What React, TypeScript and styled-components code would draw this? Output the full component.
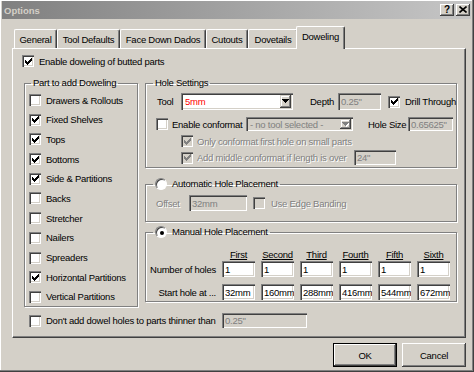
import React from "react";
import styled, { createGlobalStyle } from "styled-components";

const FACE = "#d4d0c8";
const SHADOW = "#808080";
const DARK = "#404040";
const HI = "#ffffff";
const SUNKEN = `inset 1px 1px ${SHADOW}, inset 2px 2px ${DARK}, inset -1px -1px ${HI}, inset -2px -2px ${FACE}`;

const GlobalStyle = createGlobalStyle`
  * { box-sizing: border-box; }
  html, body { margin: 0; padding: 0; background: ${FACE}; }
  body {
    font-family: "Liberation Sans", Arial, sans-serif;
    font-size: 9.5px;
    letter-spacing: -0.25px;
    color: #000;
  }
`;

const Window = styled.div`
  width: 474px;
  height: 372px;
  background: ${FACE};
  padding: 1px 3px 3px 2px;
  box-shadow: inset -1px -1px ${DARK}, inset -2px -2px ${SHADOW}, inset 1px 1px ${HI};
  display: flex;
  flex-direction: column;
`;

const TitleBar = styled.div`
  height: 18px;
  flex: none;
  display: flex;
  align-items: center;
  justify-content: space-between;
  padding: 0 1px 0 2px;
  background: linear-gradient(to right, #808080, #c6c6c6);
`;

const TitleText = styled.span`
  color: ${FACE};
  font-weight: bold;
  letter-spacing: 0;
`;

const TitleButtons = styled.div`
  display: flex;
  gap: 2px;
`;

const TitleButton = styled.div`
  width: 14px;
  height: 12px;
  background: ${FACE};
  box-shadow: inset -1px -1px ${DARK}, inset 1px 1px ${HI}, inset -2px -2px ${SHADOW};
  display: flex;
  align-items: center;
  justify-content: center;
  font-weight: bold;
  font-size: 10px;
  letter-spacing: 0;
  line-height: 1;
  padding-bottom: 1px;
`;

const TabStrip = styled.div`
  display: flex;
  align-items: flex-end;
  height: 22px;
  margin: 7px 0 0 12px;
  flex: none;
  position: relative;
  z-index: 1;
`;

const Tab = styled.div<{ $w: number; $active?: boolean }>`
  position: relative;
  z-index: ${(p) => (p.$active ? 2 : 1)};
  width: ${(p) => p.$w}px;
  height: ${(p) => (p.$active ? 23 : 19)}px;
  margin: ${(p) => (p.$active ? "0 -2px -1px -2px" : "0")};
  background: ${FACE};
  border-top: 1px solid ${HI};
  border-left: 1px solid ${HI};
  border-right: 1px solid ${DARK};
  border-radius: 2px 2px 0 0;
  box-shadow: inset -1px 0 ${SHADOW};
  display: flex;
  align-items: center;
  justify-content: center;
  padding-bottom: ${(p) => (p.$active ? 3 : 0)}px;
  white-space: nowrap;
`;

const Panel = styled.div`
  flex: none;
  height: 290px;
  margin: 0 5px 0 10px;
  border-style: solid;
  border-width: 1px;
  border-color: ${HI} ${DARK} ${DARK} ${HI};
  box-shadow: inset -1px -1px ${SHADOW};
  padding: 6px 0 0 9px;
  display: flex;
  flex-direction: column;
`;

const Row = styled.div<{ $h?: number; $mt?: number; $pl?: number; $gap?: number }>`
  display: flex;
  align-items: center;
  flex: none;
  height: ${(p) => (p.$h ? `${p.$h}px` : "auto")};
  margin-top: ${(p) => p.$mt ?? 0}px;
  padding-left: ${(p) => p.$pl ?? 0}px;
  gap: ${(p) => p.$gap ?? 0}px;
  white-space: nowrap;
`;

const Columns = styled.div`
  display: flex;
  align-items: flex-start;
  margin-top: 10px;
  padding-left: 2px;
  gap: 7px;
`;

const RightColumn = styled.div`
  display: flex;
  flex-direction: column;
  width: 312px;
`;

const Group = styled.fieldset<{ $w: number; $h: number; $mt?: number; $pt?: number; $pl?: number }>`
  margin: ${(p) => p.$mt ?? 0}px 0 0 0;
  padding: ${(p) => p.$pt ?? 0}px 0 0 ${(p) => p.$pl ?? 0}px;
  min-inline-size: 0;
  width: ${(p) => p.$w}px;
  height: ${(p) => p.$h}px;
  border: 1px solid ${SHADOW};
  box-shadow: inset 1px 1px ${HI}, 1px 1px ${HI};
  display: flex;
  flex-direction: column;
  flex: none;
`;

const Legend = styled.legend<{ $ml: number }>`
  margin-left: ${(p) => p.$ml}px;
  padding: 0 2px;
  height: 12px;
  line-height: 12px;
`;

const LegendInner = styled.span`
  display: inline-flex;
  align-items: center;
  gap: 5px;
  height: 12px;
  vertical-align: top;
`;

const PartList = styled.div`
  display: flex;
  flex-direction: column;
  gap: 5.7px;
  padding: 4px 0 0 4px;
`;

const Box = styled.span<{ $disabled?: boolean }>`
  width: 12px;
  height: 12px;
  flex: none;
  background: ${(p) => (p.$disabled ? FACE : "#fff")};
  box-shadow: ${SUNKEN};
  display: flex;
  align-items: center;
  justify-content: center;
`;

const RadioCircle = styled.span<{ $on?: boolean }>`
  width: 12px;
  height: 12px;
  flex: none;
  border-radius: 50%;
  background: #fff;
  border: 1px solid;
  border-color: ${SHADOW} ${HI} ${HI} ${SHADOW};
  box-shadow: inset 1px 1px ${DARK};
  display: flex;
  align-items: center;
  justify-content: center;
  &::after {
    content: "";
    display: ${(p) => (p.$on ? "block" : "none")};
    width: 4px;
    height: 4px;
    border-radius: 50%;
    background: #000;
    margin: 1px 0 0 1px;
  }
`;

const Text = styled.span<{ $disabled?: boolean; $w?: number; $align?: string }>`
  flex: none;
  white-space: nowrap;
  color: ${(p) => (p.$disabled ? SHADOW : "#000")};
  text-shadow: ${(p) => (p.$disabled ? `1px 1px ${HI}` : "none")};
  width: ${(p) => (p.$w ? `${p.$w}px` : "auto")};
  text-align: ${(p) => p.$align ?? "left"};
`;

const Spacer = styled.span<{ $w: number }>`
  flex: none;
  width: ${(p) => p.$w}px;
`;

const Field = styled.input<{ $w: number; $h: number }>`
  width: ${(p) => p.$w}px;
  height: ${(p) => p.$h}px;
  flex: none;
  border: none;
  outline: none;
  margin: 0;
  font: inherit;
  letter-spacing: inherit;
  padding: 0 0 0 3px;
  background: #fff;
  color: #000;
  box-shadow: ${SUNKEN};
  &:disabled {
    background: ${FACE};
    color: ${SHADOW};
  }
`;

const Combo = styled.div<{ $w: number; $h: number; $disabled?: boolean }>`
  width: ${(p) => p.$w}px;
  height: ${(p) => p.$h}px;
  flex: none;
  display: flex;
  align-items: center;
  background: ${(p) => (p.$disabled ? FACE : "#fff")};
  box-shadow: ${SUNKEN};
  padding: 2px 2px 2px 4px;
`;

const ComboText = styled.span<{ $color: string }>`
  flex: 1;
  color: ${(p) => p.$color};
  overflow: hidden;
`;

const DropButton = styled.span`
  width: 11px;
  align-self: stretch;
  flex: none;
  background: ${FACE};
  box-shadow: inset -1px -1px ${DARK}, inset 1px 1px ${FACE}, inset -2px -2px ${SHADOW}, inset 2px 2px ${HI};
  display: flex;
  align-items: center;
  justify-content: center;
`;

const MatrixRow = styled.div<{ $h: number; $mt: number }>`
  display: grid;
  grid-template-columns: 70px repeat(6, 33px);
  column-gap: 6px;
  align-items: center;
  height: ${(p) => p.$h}px;
  margin-top: ${(p) => p.$mt}px;
`;

const ColHead = styled.span`
  text-align: center;
  text-decoration: underline;
  text-underline-offset: 1px;
`;

const RowLabel = styled.span`
  text-align: right;
  white-space: nowrap;
`;

const Buttons = styled.div`
  display: flex;
  justify-content: flex-end;
  gap: 5px;
  margin: 5px 5px 0 0;
`;

const DlgButton = styled.button<{ $default?: boolean }>`
  width: 64px;
  height: 24px;
  margin: 0;
  padding: 0;
  border: none;
  font: inherit;
  letter-spacing: inherit;
  color: #000;
  background: ${FACE};
  box-shadow: ${(p) =>
    p.$default
      ? `inset 0 0 0 1px #000, inset -2px -2px ${DARK}, inset 2px 2px ${HI}, inset -3px -3px ${SHADOW}`
      : `inset -1px -1px ${DARK}, inset 1px 1px ${HI}, inset -2px -2px ${SHADOW}`};
`;

function CheckMark({ color }: { color: string }) {
  const cols = [2, 3, 4, 3, 2, 1, 0];
  return (
    <svg width="7" height="7" viewBox="0 0 7 7" shapeRendering="crispEdges">
      {cols.map((y, x) => (
        <rect key={x} x={x} y={y} width="1" height="3" fill={color} />
      ))}
    </svg>
  );
}

function Check({ on, disabled }: { on?: boolean; disabled?: boolean }) {
  return <Box $disabled={disabled}>{on && <CheckMark color={disabled ? SHADOW : "#000"} />}</Box>;
}

function DownArrow({ disabled }: { disabled?: boolean }) {
  return (
    <svg width="7" height="5" viewBox="0 0 7 5" shapeRendering="crispEdges">
      {disabled && <path d="M1 1h7l-3.5 4z" fill={HI} />}
      <path d="M0 0h7v1h-1v1h-1v1h-1v1h-1v-1h-1v-1h-1v-1h-1z" fill={disabled ? SHADOW : "#000"} />
    </svg>
  );
}

const parts: [string, boolean][] = [
  ["Drawers & Rollouts", false],
  ["Fixed Shelves", true],
  ["Tops", true],
  ["Bottoms", true],
  ["Side & Partitions", true],
  ["Backs", false],
  ["Stretcher", false],
  ["Nailers", false],
  ["Spreaders", false],
  ["Horizontal Partitions", true],
  ["Vertical Partitions", false],
];

const tabs: [string, number][] = [
  ["General", 43],
  ["Tool Defaults", 63],
  ["Face Down Dados", 86],
  ["Cutouts", 42],
  ["Dovetails", 50],
];

const heads = ["First", "Second", "Third", "Fourth", "Fifth", "Sixth"];
const starts = ["32mm", "160mm", "288mm", "416mm", "544mm", "672mm"];

export default function App() {
  return (
    <>
      <GlobalStyle />
      <Window>
        <TitleBar>
          <TitleText>Options</TitleText>
          <TitleButtons>
            <TitleButton>?</TitleButton>
            <TitleButton>
              <svg width="8" height="7" viewBox="0 0 8 7">
                <path d="M0.5 0.5L7.5 6.5M7.5 0.5L0.5 6.5" stroke="#000" strokeWidth="1.6" />
              </svg>
            </TitleButton>
          </TitleButtons>
        </TitleBar>

        <TabStrip>
          {tabs.map(([t, w]) => (
            <Tab key={t} $w={w}>
              {t}
            </Tab>
          ))}
          <Tab $w={49} $active>
            Doweling
          </Tab>
        </TabStrip>

        <Panel>
          <Row $h={12} $gap={5}>
            <Check on />
            <Text>Enable doweling of butted parts</Text>
          </Row>

          <Columns>
            <Group $w={114} $h={230}>
              <Legend $ml={6}>Part to add Doweling</Legend>
              <PartList>
                {parts.map(([label, on]) => (
                  <Row key={label} $h={14} $gap={5}>
                    <Check on={on} />
                    <Text>{label}</Text>
                  </Row>
                ))}
              </PartList>
            </Group>

            <RightColumn>
              <Group $w={312} $h={91} $pt={4}>
                <Legend $ml={7}>Hole Settings</Legend>
                <Row $h={17} $pl={11}>
                  <Text $w={24}>Tool</Text>
                  <Combo $w={112} $h={17}>
                    <ComboText $color="#f00">5mm</ComboText>
                    <DropButton>
                      <DownArrow />
                    </DropButton>
                  </Combo>
                  <Spacer $w={17} />
                  <Text $w={28}>Depth</Text>
                  <Field $w={43} $h={17} disabled defaultValue={'0.25"'} />
                  <Spacer $w={7} />
                  <Check on />
                  <Spacer $w={5} />
                  <Text>Drill Through</Text>
                </Row>
                <Row $h={14} $mt={7} $pl={10}>
                  <Check />
                  <Spacer $w={4} />
                  <Text $w={74}>Enable conformat</Text>
                  <Combo $w={107} $h={14} $disabled>
                    <ComboText $color={SHADOW}>- no tool selected -</ComboText>
                    <DropButton>
                      <DownArrow disabled />
                    </DropButton>
                  </Combo>
                  <Spacer $w={15} />
                  <Text $w={40}>Hole Size</Text>
                  <Field $w={45} $h={14} disabled defaultValue={'0.65625"'} />
                </Row>
                <Row $h={12} $mt={4} $pl={35} $gap={4}>
                  <Check on disabled />
                  <Text $disabled>Only conformat first hole on small parts</Text>
                </Row>
                <Row $h={15} $mt={3} $pl={35}>
                  <Check on disabled />
                  <Spacer $w={4} />
                  <Text $disabled $w={157}>
                    Add middle conformat if length is over
                  </Text>
                  <Field $w={42} $h={15} disabled defaultValue={'24"'} />
                </Row>
              </Group>

              <Group $w={312} $h={44} $mt={10} $pt={5}>
                <Legend $ml={7}>
                  <LegendInner>
                    <RadioCircle />
                    <span>Automatic Hole Placement</span>
                  </LegendInner>
                </Legend>
                <Row $h={16} $pl={10}>
                  <Text $disabled $w={33}>
                    Offset
                  </Text>
                  <Field $w={58} $h={16} disabled defaultValue="32mm" />
                  <Spacer $w={6} />
                  <Check disabled />
                  <Spacer $w={6} />
                  <Text $disabled>Use Edge Banding</Text>
                </Row>
              </Group>

              <Group $w={312} $h={76} $mt={4} $pt={10}>
                <Legend $ml={7}>
                  <LegendInner>
                    <RadioCircle $on />
                    <span>Manual Hole Placement</span>
                  </LegendInner>
                </Legend>
                <MatrixRow $h={12} $mt={0}>
                  <span />
                  {heads.map((h) => (
                    <ColHead key={h}>{h}</ColHead>
                  ))}
                </MatrixRow>
                <MatrixRow $h={16} $mt={1}>
                  <RowLabel>Number of holes</RowLabel>
                  {heads.map((h) => (
                    <Field key={h} $w={33} $h={16} defaultValue="1" />
                  ))}
                </MatrixRow>
                <MatrixRow $h={16} $mt={7}>
                  <RowLabel>Start hole at ...</RowLabel>
                  {starts.map((s) => (
                    <Field key={s} $w={33} $h={16} defaultValue={s} />
                  ))}
                </MatrixRow>
              </Group>
            </RightColumn>
          </Columns>

          <Row $h={15} $mt={6} $pl={7}>
            <Check />
            <Spacer $w={5} />
            <Text $w={176}>Don't add dowel holes to parts thinner than</Text>
            <Field $w={85} $h={15} disabled defaultValue={'0.25"'} />
          </Row>
        </Panel>

        <Buttons>
          <DlgButton $default>OK</DlgButton>
          <DlgButton>Cancel</DlgButton>
        </Buttons>
      </Window>
    </>
  );
}
